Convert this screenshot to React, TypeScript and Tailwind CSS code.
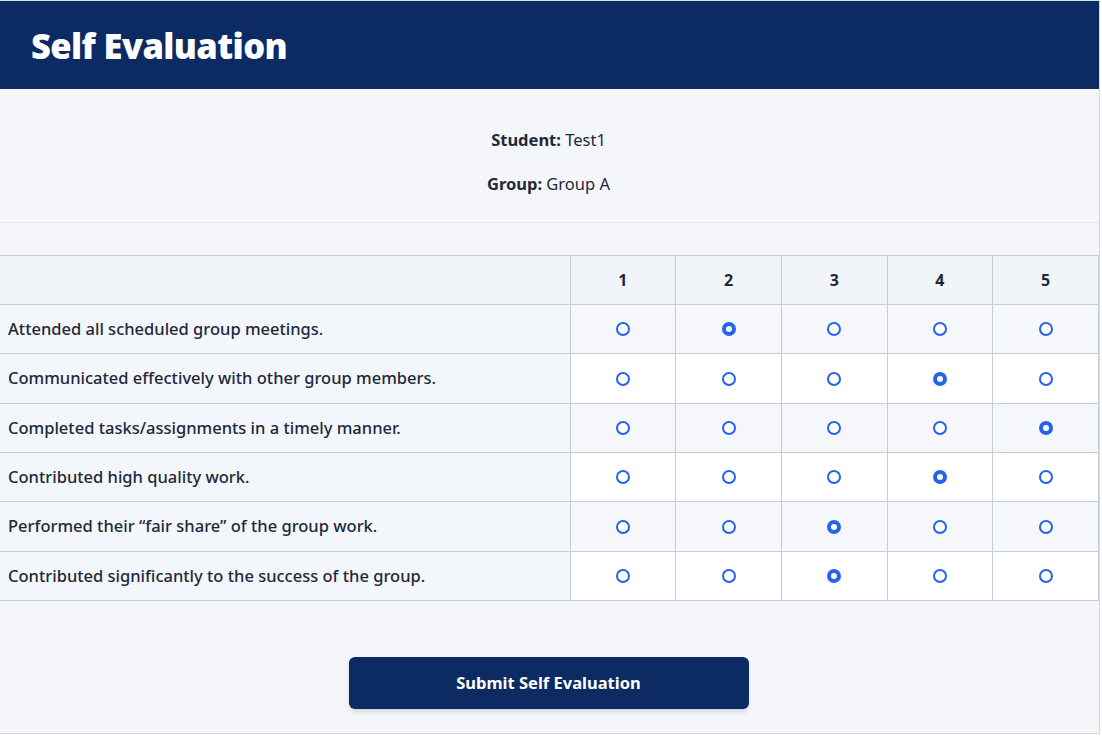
import React, { useState } from "react";

const items = [
  "Attended all scheduled group meetings.",
  "Communicated effectively with other group members.",
  "Completed tasks/assignments in a timely manner.",
  "Contributed high quality work.",
  "Performed their \u201cfair share\u201d of the group work.",
  "Contributed significantly to the success of the group.",
];

const heights = ["h-[49px]", "h-[50px]", "h-[49px]", "h-[49px]", "h-[50px]", "h-[49px]"];

const initial = [2, 4, 5, 4, 3, 3];

function Radio({ checked, onClick }: { checked: boolean; onClick: () => void }) {
  return (
    <button
      type="button"
      onClick={onClick}
      className={
        checked
          ? "w-[14px] h-[14px] rounded-full bg-[#2563eb] flex items-center justify-center"
          : "w-[14px] h-[14px] rounded-full border-2 border-[#2563eb] bg-white"
      }
    >
      {checked && <span className="block w-[6px] h-[6px] rounded-full bg-white" />}
    </button>
  );
}

export default function App() {
  const [vals, setVals] = useState<number[]>(initial);
  return (
    <div
      className="w-[1100px] h-[734px] border border-l-0 border-[#d6dbe2] bg-[#f5f6fa] flex flex-col text-[#1e293b]"
      style={{ fontFamily: '"Noto Sans", "Open Sans", sans-serif' }}
    >
      <div className="h-[88px] bg-[#0b2b62] flex items-center pl-[31px] shrink-0">
        <h1 className="text-[34.5px] font-black text-white tracking-[-0.6px] leading-none pt-[3px]">
          Self Evaluation
        </h1>
      </div>
      <div className="flex flex-col items-center pt-[39px] pb-[26px] border-b border-[#e3e6eb] text-[16.5px] leading-[24px] gap-[20px] pr-[2px]">
        <p>
          <span className="font-bold">Student:</span> Test1
        </p>
        <p>
          <span className="font-bold">Group:</span> Group A
        </p>
      </div>
      <div className="pt-[32px]">
        <table className="w-[1099px] border-collapse text-[16.5px]">
          <thead>
            <tr className="bg-[#f1f4f9]">
              <th className="w-[570px] h-[49px] border-t border-b border-[#c3ccd7]"></th>
              {[1, 2, 3, 4, 5].map((n) => (
                <th
                  key={n}
                  className="h-[49px] border border-[#c3ccd7] font-bold text-center text-[16px]"
                >
                  {n}
                </th>
              ))}
            </tr>
          </thead>
          <tbody>
            {items.map((item, i) => (
              <tr key={i}>
                <td
                  className={
                    heights[i] +
                    " pl-[8px] border-b border-[#c3ccd7] bg-[#f3f6fa] font-medium"
                  }
                >
                  {item}
                </td>
                {[1, 2, 3, 4, 5].map((n) => (
                  <td
                    key={n}
                    className={
                      heights[i] +
                      " border border-[#c3ccd7] " +
                      (i % 2 === 0 ? "bg-[#f5f7fb]" : "bg-white")
                    }
                  >
                    <div className="flex items-center justify-center">
                      <Radio
                        checked={vals[i] === n}
                        onClick={() =>
                          setVals((v) => v.map((x, j) => (j === i ? n : x)))
                        }
                      />
                    </div>
                  </td>
                ))}
              </tr>
            ))}
          </tbody>
        </table>
      </div>
      <div className="flex justify-center pt-[56px] pr-[2px]">
        <button
          type="button"
          className="w-[400px] h-[52px] rounded-[6px] bg-[#0b2b62] text-white font-bold text-[16.5px] shadow-md"
        >
          Submit Self Evaluation
        </button>
      </div>
    </div>
  );
}
